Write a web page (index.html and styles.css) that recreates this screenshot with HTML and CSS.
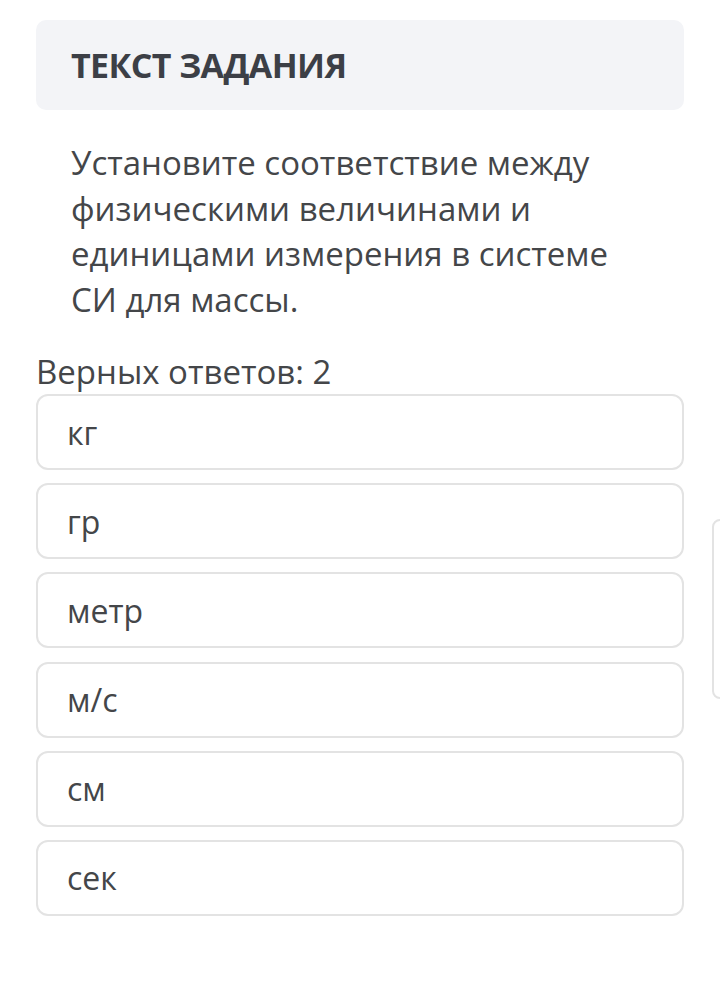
FILE: index.html
```html
<!DOCTYPE html>
<html lang="ru">
<head>
  <meta charset="UTF-8">
  <title>Текст задания</title>
  <meta name="viewport" content="width=device-width,initial-scale=1">
  <link rel="stylesheet" href="styles.css">
</head>
<body>
  <div class="page">
    <div class="task-head">
      <h2>ТЕКСТ ЗАДАНИЯ</h2>
    </div>
    <p class="task-text">Установите соответствие между физическими величинами и единицами измерения в системе СИ для массы.</p>
    <div class="answers-count">Верных ответов: 2</div>
    <div class="options">
      <div class="option">кг</div>
      <div class="option">гр</div>
      <div class="option">метр</div>
      <div class="option">м/с</div>
      <div class="option">см</div>
      <div class="option">сек</div>
    </div>
  </div>
  <div class="side-tab"></div>
</body>
</html>
```

FILE: styles.css
```css
body {
  font-family: 'Open Sans', Arial, sans-serif;
  background: #fff;
  margin: 0;
  padding: 0;
  color: #444649;
  overflow: hidden;
}
.page {
  width: 648px;
  padding: 20px 0 0 36px;
}
.task-head {
  background: #f3f4f7;
  border-radius: 10px;
  height: 90px;
  display: flex;
  align-items: center;
  padding: 0 35px;
}
.task-head h2 {
  margin: 0;
  font-size: 34px;
  font-weight: 700;
  color: #3c3f46;
  letter-spacing: -0.6px;
}
.task-text {
  margin: 30px 40px 0 35px;
  font-size: 33px;
  line-height: 45.5px;
}
.answers-count {
  margin-top: 28px;
  font-size: 33px;
  line-height: 44px;
}
.options {
  display: flex;
  flex-direction: column;
  gap: 13.2px;
}
.option {
  box-sizing: border-box;
  height: 76px;
  border: 2px solid #e3e3e3;
  border-radius: 12px;
  display: flex;
  align-items: center;
  padding: 0 29px;
  font-size: 32px;
}
.side-tab {
  position: absolute;
  left: 712px;
  top: 519px;
  width: 20px;
  height: 176px;
  border: 2px solid #e3e3e3;
  border-radius: 8px;
}
```
